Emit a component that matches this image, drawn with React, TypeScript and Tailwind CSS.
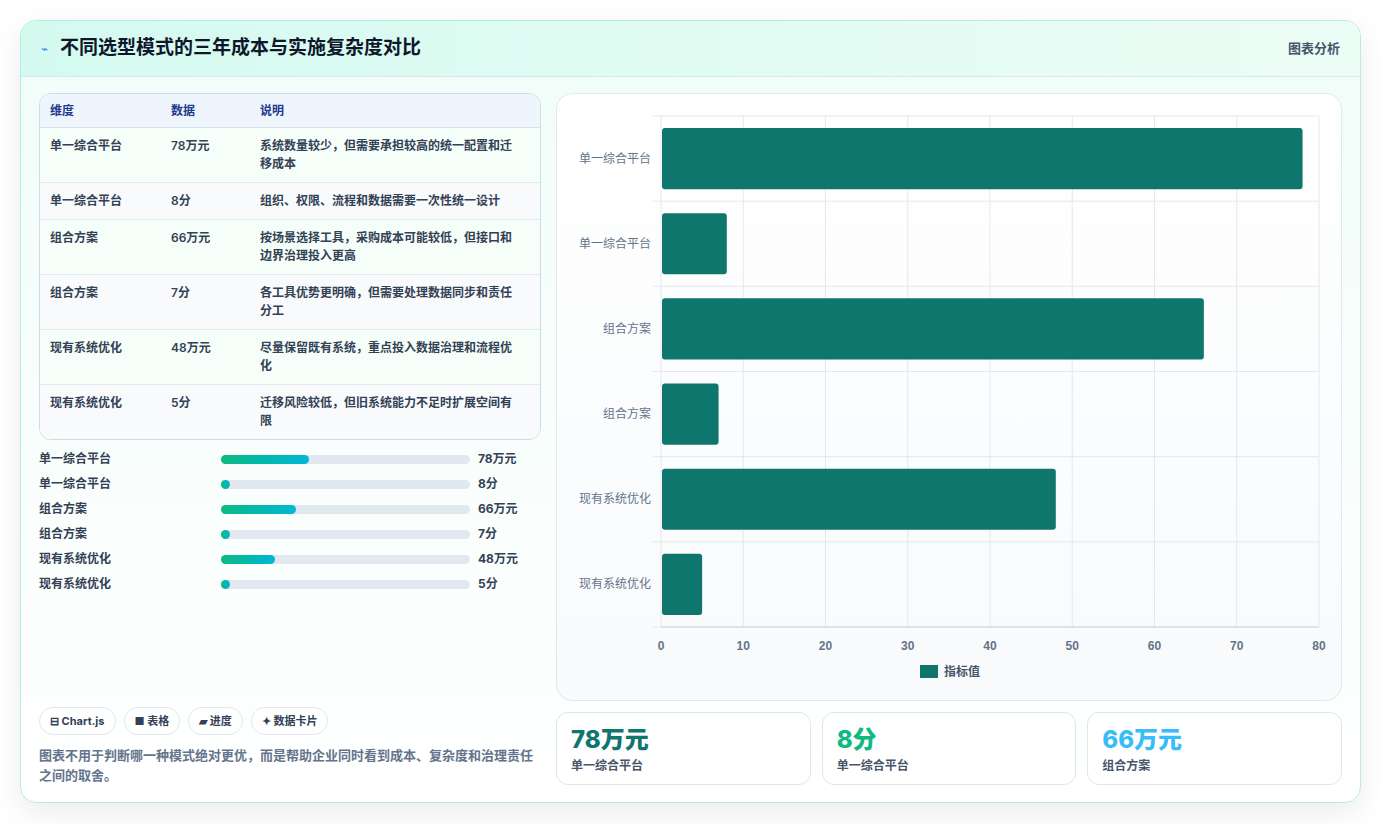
import React from "react";

const rows = [
  { d: "单一综合平台", v: "78万元", n: "系统数量较少，但需要承担较高的统一配置和迁移成本", num: 78 },
  { d: "单一综合平台", v: "8分", n: "组织、权限、流程和数据需要一次性统一设计", num: 8 },
  { d: "组合方案", v: "66万元", n: "按场景选择工具，采购成本可能较低，但接口和边界治理投入更高", num: 66 },
  { d: "组合方案", v: "7分", n: "各工具优势更明确，但需要处理数据同步和责任分工", num: 7 },
  { d: "现有系统优化", v: "48万元", n: "尽量保留既有系统，重点投入数据治理和流程优化", num: 48 },
  { d: "现有系统优化", v: "5分", n: "迁移风险较低，但旧系统能力不足时扩展空间有限", num: 5 },
];

function Chart() {
  const x0 = 104, x1 = 762, y0 = 22, y1 = 533;
  const sx = (v: number) => x0 + ((x1 - x0) * v) / 80;
  const band = (y1 - y0) / 6;
  return (
    <svg width="784" height="606" className="block">
      {[0, 1, 2, 3, 4, 5, 6, 7, 8].map((i) => (
        <line key={i} x1={sx(i * 10)} x2={sx(i * 10)} y1={y0} y2={y1} stroke="#e5e7eb" />
      ))}
      {[0, 1, 2, 3, 4, 5, 6].map((i) => (
        <line key={i} x1={x0 - 8} x2={x1} y1={y0 + band * i} y2={y0 + band * i} stroke="#e5e7eb" />
      ))}
      <line x1={x0} x2={x1} y1={y1} y2={y1} stroke="#cbd5e1" />
      {rows.map((r, i) => (
        <g key={i}>
          <rect x={x0 + 1} y={y0 + band * i + 12} width={sx(r.num) - x0 - 1} height={band - 24} rx="3" fill="#0f766e" />
          <text x={x0 - 10} y={y0 + band * i + band / 2 + 4} textAnchor="end" fontSize="12" fill="#64748b" fontFamily="'Noto Sans CJK SC', sans-serif">{r.d}</text>
        </g>
      ))}
      {[0, 1, 2, 3, 4, 5, 6, 7, 8].map((i) => (
        <text key={i} x={sx(i * 10)} y={y1 + 23} textAnchor="middle" fontSize="12" fontWeight="bold" fill="#64748b" fontFamily="'Liberation Sans', sans-serif">{i * 10}</text>
      ))}
      <rect x="363" y="571" width="18" height="13" fill="#0f766e" />
      <text x="387" y="582" fontSize="12" fontWeight="bold" fill="#475569" fontFamily="'Noto Sans CJK SC', sans-serif">指标值</text>
    </svg>
  );
}

export default function App() {
  const font = { fontFamily: "Inter, 'Noto Sans CJK SC', sans-serif" };
  return (
    <div className="w-[1381px] h-[824px] bg-white p-5" style={font}>
      <div className="h-[783px] rounded-2xl border border-[#b7ece0] bg-gradient-to-b from-[#f0fdf8] to-white shadow-[0_10px_30px_rgba(0,0,0,0.08)] flex flex-col overflow-hidden">
        <div className="h-[56px] shrink-0 flex items-center justify-between px-5 bg-gradient-to-r from-[#d4faf0] to-[#ecfdf5] border-b border-[#d8e9ee]">
          <div className="flex items-center gap-3">
            <span className="text-[#3b82f6] text-xs">⌁</span>
            <h1 className="text-[19px] font-bold text-[#0f172a]">不同选型模式的三年成本与实施复杂度对比</h1>
          </div>
          <span className="text-[13px] font-semibold text-[#475569]">图表分析</span>
        </div>
        <div className="flex-1 flex gap-[15px] px-[18px] pt-4 pb-[17px]">
          <div className="w-[503px] flex flex-col">
            <div className="rounded-xl border border-[#d1dbe6] overflow-hidden bg-white text-[12px]">
              <div className="grid grid-cols-[121px_89px_1fr] h-[34px] items-center bg-[#eef5fd] px-[10px] font-semibold text-[#1e3a8a] border-b border-[#d6e0ea]">
                <div>维度</div><div>数据</div><div>说明</div>
              </div>
              {rows.map((r, i) => (
                <div key={i} className={`grid grid-cols-[121px_89px_1fr] px-[10px] py-[9px] leading-[18px] font-semibold text-[#334155] border-b border-[#e2e8f0] last:border-b-0 ${i % 2 ? "bg-[#f8fafc]" : "bg-[#f6fef9]"}`}>
                  <div>{r.d}</div><div>{r.v}</div><div className="pr-2">{r.n}</div>
                </div>
              ))}
            </div>
            <div className="mt-[10px] flex flex-col gap-[7px]">
              {rows.map((r, i) => (
                <div key={i} className="flex items-center h-[18px] text-[12px] font-semibold text-[#334155]">
                  <div className="w-[182px]">{r.d}</div>
                  <div className="w-[249px] h-[9px] rounded-full bg-[#e2e8f0]">
                    <div className="h-full rounded-full bg-gradient-to-r from-[#10b981] to-[#06b6d4] min-w-[9px]" style={{ width: `${(r.num / 220) * 100}%` }} />
                  </div>
                  <div className="ml-2 font-bold">{r.v}</div>
                </div>
              ))}
            </div>
            <div className="mt-auto">
              <div className="flex gap-[8px]">
                {["⊟ Chart.js", "■ 表格", "▰ 进度", "✦ 数据卡片"].map((t) => (
                  <span key={t} className="h-[28px] px-[10px] flex items-center rounded-full border border-[#e2e8f0] bg-white text-[11px] font-bold text-[#334155]">{t}</span>
                ))}
              </div>
              <p className="mt-[10px] text-[13px] leading-[20px] font-semibold text-[#64748b]">图表不用于判断哪一种模式绝对更优，而是帮助企业同时看到成本、复杂度和治理责任之间的取舍。</p>
            </div>
          </div>
          <div className="flex-1 flex flex-col gap-[11px]">
            <div className="h-[608px] rounded-2xl border border-[#e2e8f0] bg-gradient-to-b from-white to-[#f8fafc] overflow-hidden">
              <Chart />
            </div>
            <div className="grid grid-cols-3 gap-[11px] flex-1">
              {[
                { v: "78万元", l: "单一综合平台", c: "text-[#0f766e]" },
                { v: "8分", l: "单一综合平台", c: "text-[#10b981]" },
                { v: "66万元", l: "组合方案", c: "text-[#38bdf8]" },
              ].map((s, i) => (
                <div key={i} className="rounded-xl border border-[#dbe7ee] bg-white px-[14px] pt-[10px]">
                  <div className={`text-[24px] font-extrabold leading-[34px] ${s.c}`}>{s.v}</div>
                  <div className="text-[12px] font-semibold text-[#475569]">{s.l}</div>
                </div>
              ))}
            </div>
          </div>
        </div>
      </div>
    </div>
  );
}
